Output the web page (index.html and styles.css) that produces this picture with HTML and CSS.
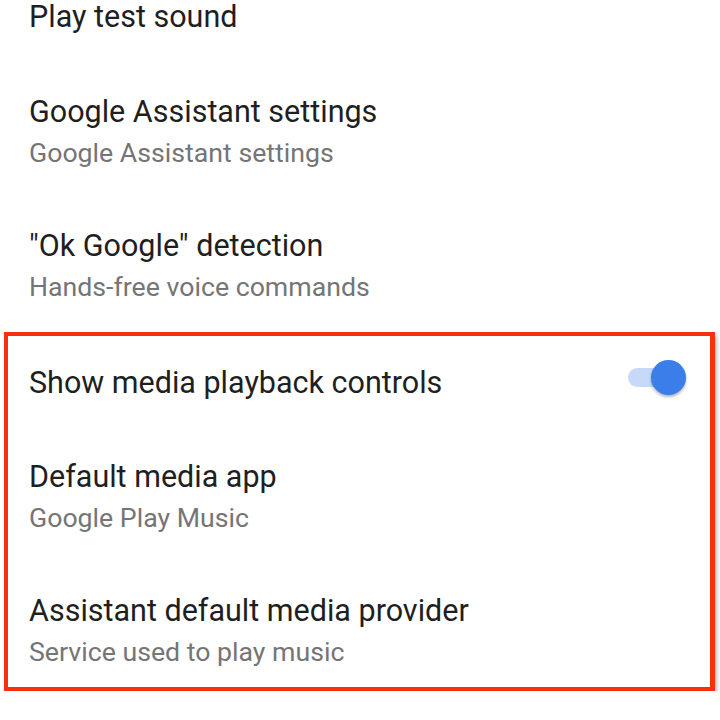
FILE: index.html
```html
<!DOCTYPE html>
<html lang="en">
<head>
  <meta charset="UTF-8" />
  <meta name="viewport" content="width=device-width, initial-scale=1.0" />
  <title>Voice settings</title>
  <link rel="stylesheet" href="styles.css">
</head>
<body>
  <div class="settings">
    <div class="row first">
      <div class="title">Play test sound</div>
    </div>

    <div class="row double">
      <div class="title">Google Assistant settings</div>
      <div class="summary">Google Assistant settings</div>
    </div>

    <div class="row double">
      <div class="title">"Ok Google" detection</div>
      <div class="summary">Hands-free voice commands</div>
    </div>

    <div class="highlight">
      <div class="row toggle-row">
        <div class="title">Show media playback controls</div>
        <div class="switch on">
          <span class="track"></span>
          <span class="thumb"></span>
        </div>
      </div>

      <div class="row double">
        <div class="title">Default media app</div>
        <div class="summary">Google Play Music</div>
      </div>

      <div class="row double last">
        <div class="title">Assistant default media provider</div>
        <div class="summary">Service used to play music</div>
      </div>
    </div>
  </div>
</body>
</html>
```

FILE: styles.css
```css
html, body {
  margin: 0;
  padding: 0;
  background: #fff;
  font-family: Roboto, "Noto Sans", Arial, sans-serif;
  overflow: hidden;
}
.settings {
  width: 720px;
}
.row {
  display: flex;
  flex-direction: column;
  padding: 0 29px;
  box-sizing: border-box;
}
.title {
  font-size: 30.5px;
  line-height: 36px;
  color: #1f1f1f;
  white-space: nowrap;
}
.summary {
  font-size: 26.7px;
  line-height: 32px;
  color: #757575;
  margin-top: 7px;
  white-space: nowrap;
}
.row.first {
  height: 65px;
  margin-top: -1px;
  padding-bottom: 0;
}
.row.double {
  height: 134px;
  padding-top: 30px;
}
/* annotation box */
.highlight {
  margin: 0 5px 0 4px;
  border: 4px solid #f4300f;
  border-right-width: 5px;
  box-shadow: 2px 3px 4px rgba(0, 0, 0, 0.28);
}
.highlight .row {
  padding-left: 21px;
  padding-right: 24px;
}
.row.toggle-row {
  height: 93px;
  flex-direction: row;
  align-items: center;
  justify-content: space-between;
}
.row.double.last {
  height: 124px;
}
.switch {
  position: relative;
  width: 58px;
  height: 36px;
  margin-top: -9px;
}
.switch .track {
  position: absolute;
  left: 0;
  top: 8px;
  width: 52px;
  height: 19px;
  border-radius: 10px;
  background: #c6d9f8;
}
.switch .thumb {
  position: absolute;
  right: 0;
  top: 0;
  width: 35px;
  height: 35px;
  border-radius: 50%;
  background: #3b7de9;
  box-shadow: 0 2px 3px rgba(0, 0, 0, 0.3);
}
```
